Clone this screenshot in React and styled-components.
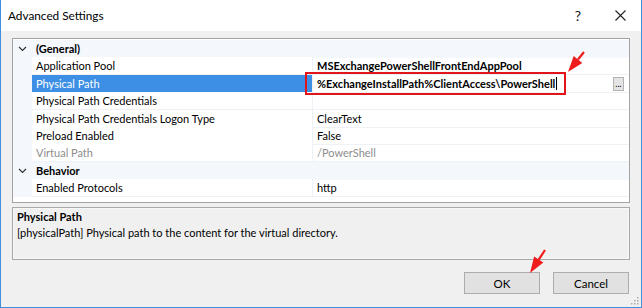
import React from "react";
import styled, { createGlobalStyle } from "styled-components";

const GlobalStyle = createGlobalStyle`
    html, body {
        margin: 0;
        padding: 0;
        background: #ffffff;
    }
    body {
        font-family: "Lato", "Noto Sans", sans-serif;
        font-size: 11px;
        color: #000;
    }
`;

const Window = styled.div`
    position: relative;
    width: 642px;
    height: 308px;
    box-sizing: border-box;
    background: #f0f0f0;
    border: 1px solid #3f8fdc;
    border-top: none;
    display: flex;
    flex-direction: column;
`;

const TitleBar = styled.div`
    height: 31px;
    background: #ffffff;
    display: flex;
    align-items: center;
    padding-left: 7px;
    font-size: 11.8px;
`;

const Title = styled.div`
    flex: 1;
`;

const TitleButton = styled.div`
    width: 42px;
    height: 31px;
    display: flex;
    align-items: center;
    justify-content: center;
    font-size: 14px;
    color: #111;
`;

const Body = styled.div`
    flex: 1;
    display: flex;
    flex-direction: column;
    padding: 7px 11px 0 11px;
`;

const Grid = styled.div`
    height: 165px;
    box-sizing: border-box;
    border: 1px solid #a3a3a3;
    padding-top: 1px;
    background: #ffffff;
`;

const Row = styled.div`
    display: grid;
    grid-template-columns: 19px 281px 1fr;
    height: 17.4px;
    line-height: 18px;
    font-size: 11px;
`;

const Gutter = styled.div`
    background: #f4f7fc;
    display: flex;
    align-items: center;
    justify-content: center;
`;

const CategoryLabel = styled.div`
    grid-column: 2 / 4;
    background: #f4f7fc;
    font-weight: bold;
    padding-left: 4px;
`;

const NameCell = styled.div`
    padding-left: 4px;
    box-shadow: inset 0 -1px 0 #eef1f6, inset -1px 0 0 #eef1f6;
    background: ${p => (p.selected ? "#3c8fe4" : "#ffffff")};
    color: ${p => (p.selected ? "#ffffff" : p.disabled ? "#8d8d8d" : "#000")};
    white-space: nowrap;
    overflow: hidden;
`;

const ValueCell = styled.div`
    position: relative;
    padding-left: 4px;
    box-shadow: inset 0 -1px 0 #eef1f6;
    font-weight: ${p => (p.bold ? "bold" : "normal")};
    color: ${p => (p.disabled ? "#8d8d8d" : "#000")};
    white-space: nowrap;
    display: flex;
    align-items: center;
`;

const Caret = styled.span`
    display: inline-block;
    width: 1px;
    height: 13px;
    background: #000;
    margin-left: 1px;
`;

const Highlight = styled.div`
    position: absolute;
    left: -8px;
    top: -3px;
    width: 261px;
    height: 23px;
    box-sizing: border-box;
    border: 2px solid #e2151b;
    pointer-events: none;
`;

const EllipsisButton = styled.div`
    position: absolute;
    right: 5px;
    top: 2px;
    width: 11px;
    height: 14px;
    box-sizing: border-box;
    border: 1px solid #b3b3b3;
    background: #e4e4e4;
    font-size: 9px;
    line-height: 12px;
    text-align: center;
    font-weight: normal;
`;

const Description = styled.div`
    margin-top: 4px;
    height: 53px;
    box-sizing: border-box;
    border: 1px solid #a9a9a9;
    box-shadow: inset 0 0 0 1px #f7f7f7;
    padding: 1px 4px;
    font-size: 11px;
    line-height: 16px;
`;

const DescTitle = styled.div`
    font-weight: bold;
`;

const Footer = styled.div`
    display: flex;
    justify-content: flex-end;
    gap: 13px;
    padding: 12px 1px 0 0;
`;

const Button = styled.div`
    width: 76px;
    height: 22px;
    box-sizing: border-box;
    border: 1px solid #adadad;
    background: #e1e1e1;
    display: flex;
    align-items: center;
    justify-content: center;
    font-size: 11.5px;
`;

const Arrow = styled.svg`
    position: absolute;
    left: 0;
    top: 0;
    overflow: visible;
    pointer-events: none;
`;

const Grip = styled.svg`
    position: absolute;
    right: 2px;
    bottom: 2px;
`;

const Chevron = () => (
    <svg width="9" height="6" viewBox="0 0 9 6">
        <path d="M1 1 L4.5 4.5 L8 1" fill="none" stroke="#333" strokeWidth="1.2" />
    </svg>
);

// annotation arrow: short shaft from (x,y), triangular head ending at the tip
const RedArrow = ({ x, y, tipX, tipY }) => {
    const dx = tipX - x;
    const dy = tipY - y;
    const len = Math.sqrt(dx * dx + dy * dy);
    const ux = dx / len;
    const uy = dy / len;
    const hx = tipX - ux * 16;
    const hy = tipY - uy * 16;
    const px = -uy * 5.5;
    const py = ux * 5.5;
    return (
        <Arrow width="642" height="308">
            <line x1={x} y1={y} x2={hx} y2={hy} stroke="#ee1c1c" strokeWidth="2.2" />
            <polygon
                points={`${tipX},${tipY} ${hx + px},${hy + py} ${hx - px},${hy - py}`}
                fill="#ee1c1c"
            />
        </Arrow>
    );
};

const rows = [
    { type: "category", label: "(General)" },
    { name: "Application Pool", value: "MSExchangePowerShellFrontEndAppPool", bold: true },
    { name: "Physical Path", value: "%ExchangeInstallPath%ClientAccess\\PowerShell", bold: true, selected: true },
    { name: "Physical Path Credentials", value: "" },
    { name: "Physical Path Credentials Logon Type", value: "ClearText" },
    { name: "Preload Enabled", value: "False" },
    { name: "Virtual Path", value: "/PowerShell", disabled: true },
    { type: "category", label: "Behavior" },
    { name: "Enabled Protocols", value: "http" },
];

const App = () => {
    return (
        <>
            <GlobalStyle />
            <Window>
                <TitleBar>
                    <Title>Advanced Settings</Title>
                    <TitleButton>?</TitleButton>
                    <TitleButton>
                        <svg width="11" height="11" viewBox="0 0 11 11">
                            <path d="M0.5 0.5 L10.5 10.5 M10.5 0.5 L0.5 10.5" stroke="#222" strokeWidth="1.1" />
                        </svg>
                    </TitleButton>
                </TitleBar>
                <Body>
                    <Grid>
                        {rows.map((r, i) =>
                            r.type === "category" ? (
                                <Row key={i}>
                                    <Gutter><Chevron /></Gutter>
                                    <CategoryLabel>{r.label}</CategoryLabel>
                                </Row>
                            ) : (
                                <Row key={i}>
                                    <Gutter />
                                    <NameCell selected={r.selected} disabled={r.disabled}>{r.name}</NameCell>
                                    <ValueCell bold={r.bold} disabled={r.disabled}>
                                        {r.value}
                                        {r.selected && (
                                            <>
                                                <Caret />
                                                <Highlight />
                                                <EllipsisButton>...</EllipsisButton>
                                            </>
                                        )}
                                    </ValueCell>
                                </Row>
                            )
                        )}
                    </Grid>
                    <Description>
                        <DescTitle>Physical Path</DescTitle>
                        <div>[physicalPath] Physical path to the content for the virtual directory.</div>
                    </Description>
                    <Footer>
                        <Button>OK</Button>
                        <Button>Cancel</Button>
                    </Footer>
                </Body>
                <RedArrow x={583} y={52} tipX={567} tipY={72} />
                <RedArrow x={544} y={250} tipX={529} tipY={273} />
                <Grip width="8" height="8" viewBox="0 0 8 8">
                    <rect x="6" y="0" width="1.5" height="1.5" fill="#aaa" />
                    <rect x="3" y="3" width="1.5" height="1.5" fill="#aaa" />
                    <rect x="6" y="3" width="1.5" height="1.5" fill="#aaa" />
                    <rect x="0" y="6" width="1.5" height="1.5" fill="#aaa" />
                    <rect x="3" y="6" width="1.5" height="1.5" fill="#aaa" />
                    <rect x="6" y="6" width="1.5" height="1.5" fill="#aaa" />
                </Grip>
            </Window>
        </>
    );
};

export default App;
